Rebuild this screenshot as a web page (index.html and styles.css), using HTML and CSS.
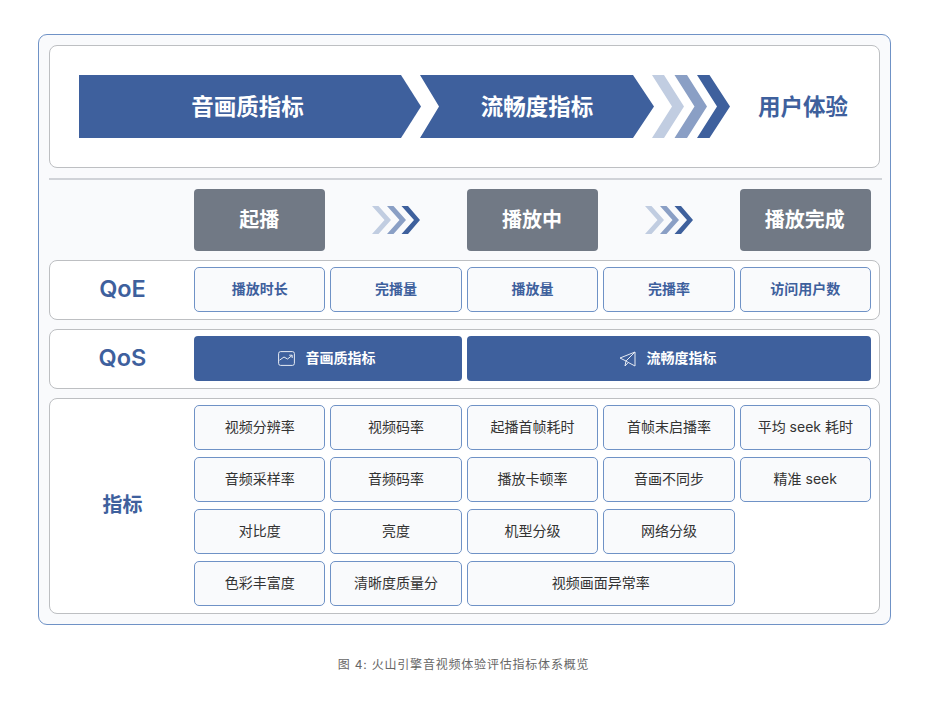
FILE: index.html
```html
<!DOCTYPE html>
<html lang="zh-CN">
<head>
<meta charset="utf-8">
<title>火山引擎音视频体验评估指标体系概览</title>
<link rel="stylesheet" href="styles.css">
</head>
<body>
<main class="frame">
  <section class="panel top">
    <div class="arrow first">音画质指标</div>
    <div class="arrow second">流畅度指标</div>
    <svg class="big-chevrons" viewBox="0 0 78 63" aria-hidden="true">
      <polygon class="c1" points="0,0 12,0 32,31.500 12,63 0,63 20,31.500"/>
      <polygon class="c2" points="22.500,0 35,0 55,31.500 35,63 22.500,63 42.500,31.500"/>
      <polygon class="c3" points="45,0 57.500,0 78,31.500 57.500,63 45,63 65,31.500"/>
    </svg>
    <div class="goal">用户体验</div>
  </section>
  <div class="divider"></div>
  <section class="grid stages">
    <div class="stage s1">起播</div>
    <div class="stage-arrow"><svg viewBox="0 0 48 28" aria-hidden="true"><polygon class="c1" points="0,0 6.500,0 19,14 6.500,28 0,28 12.500,14"/><polygon class="c2" points="15,0 21.500,0 34,14 21.500,28 15,28 27.500,14"/><polygon class="c3" points="29.500,0 36,0 48,14 36,28 29.500,28 42,14"/></svg></div>
    <div class="stage">播放中</div>
    <div class="stage-arrow"><svg viewBox="0 0 48 28" aria-hidden="true"><polygon class="c1" points="0,0 6.500,0 19,14 6.500,28 0,28 12.500,14"/><polygon class="c2" points="15,0 21.500,0 34,14 21.500,28 15,28 27.500,14"/><polygon class="c3" points="29.500,0 36,0 48,14 36,28 29.500,28 42,14"/></svg></div>
    <div class="stage">播放完成</div>
  </section>
  <section class="panel grid row">
    <div class="label latin">QoE</div>
    <div class="cell strong">播放时长</div>
    <div class="cell strong">完播量</div>
    <div class="cell strong">播放量</div>
    <div class="cell strong">完播率</div>
    <div class="cell strong">访问用户数</div>
  </section>
  <section class="panel grid row">
    <div class="label latin">QoS</div>
    <div class="fill span2">
      <svg class="ico" viewBox="0 0 17 15" aria-hidden="true"><rect x="0.600" y="0.600" width="15.800" height="13.800" rx="2"/><path d="M1.500 9.200 L6 6 L9.500 8 L14 4.500 M11.200 4.200 H14.200 V7"/></svg>
      <span>音画质指标</span>
    </div>
    <div class="fill span3">
      <svg class="ico plane" viewBox="0 0 17 16" aria-hidden="true"><path d="M16 1 L1 7 L7 10 L16 1 V15 L9 11.300 L7 10 L6 15 L9 11.800"/></svg>
      <span>流畅度指标</span>
    </div>
  </section>
  <section class="panel grid metrics">
    <div class="label cjk">指标</div>
    <div class="cell">视频分辨率</div>
    <div class="cell">视频码率</div>
    <div class="cell">起播首帧耗时</div>
    <div class="cell">首帧末启播率</div>
    <div class="cell">平均 seek 耗时</div>
    <div class="cell">音频采样率</div>
    <div class="cell">音频码率</div>
    <div class="cell">播放卡顿率</div>
    <div class="cell">音画不同步</div>
    <div class="cell">精准 seek</div>
    <div class="cell">对比度</div>
    <div class="cell">亮度</div>
    <div class="cell">机型分级</div>
    <div class="cell">网络分级</div>
    <div class="cell blank"></div>
    <div class="cell">色彩丰富度</div>
    <div class="cell">清晰度质量分</div>
    <div class="cell span2">视频画面异常率</div>
  </section>
</main>
<p class="caption">图 4: 火山引擎音视频体验评估指标体系概览</p>
</body>
</html>
```
FILE: styles.css
```css
* { box-sizing: border-box; }
html, body { margin: 0; background: #fff; }
body {
  padding: 34px 0 0 38px;
  font-family: Inter, "Noto Sans CJK SC", sans-serif;
  color: #333;
}
.frame {
  width: 853px;
  height: 591px;
  padding: 10px;
  border: 1px solid #6f92c6;
  border-radius: 9px;
  background: #f9fafc;
}
.panel {
  border: 1px solid #bdbfc2;
  border-radius: 8px;
  background: #fff;
}
.top {
  display: flex;
  align-items: center;
  height: 123px;
  padding-left: 29px;
}
.arrow {
  display: flex;
  align-items: center;
  justify-content: center;
  height: 63px;
  padding-bottom: 4px;
  background: #3e609d;
  color: #fff;
  font-size: 22.500px;
  font-weight: 700;
}
.first {
  width: 342px;
  padding-right: 5px;
  clip-path: polygon(0 0, 322px 0, 100% 50%, 322px 100%, 0 100%);
}
.second {
  width: 234px;
  margin-left: -1px;
  clip-path: polygon(0 0, 213px 0, 100% 50%, 213px 100%, 0 100%, 19px 50%);
}
.big-chevrons { width: 78px; height: 63px; margin-left: -2px; flex: none; }
.c1 { fill: #c1cde1; }
.c2 { fill: #8a9fc5; }
.c3 { fill: #3e609d; }
.goal {
  margin-left: 28px;
  padding-bottom: 4px;
  color: #3e609d;
  font-size: 22.500px;
  font-weight: 700;
}
.divider {
  height: 2px;
  margin: 10px -2px 0 0;
  background: #d0d3d8;
}
.grid {
  display: grid;
  grid-template-columns: 139px repeat(5, 1fr);
  column-gap: 5px;
}
.stages {
  height: 62px;
  margin-top: 9px;
  padding: 0 9px 0 1px;
}
.s1 { grid-column: 2; }
.stage {
  display: flex;
  align-items: center;
  justify-content: center;
  padding: 0 1px 4px 0;
  border-radius: 4px;
  background: #717985;
  color: #fff;
  font-size: 20px;
  font-weight: 700;
}
.stage-arrow { display: flex; align-items: center; justify-content: center; }
.stage-arrow svg { width: 48px; height: 28px; }
.row {
  height: 60px;
  margin-top: 9px;
  padding: 6px 8px 7px 0;
}
.metrics {
  height: 216px;
  margin-top: 9px;
  padding: 6px 8px 0 0;
  grid-template-rows: repeat(4, 45px);
  row-gap: 7px;
}
.label {
  display: flex;
  align-items: center;
  justify-content: center;
  padding: 0 0 3px 6px;
  color: #3e609d;
  font-weight: 700;
}
.latin { font-size: 23.500px; font-weight: 600; }
.cjk { padding-bottom: 4px; font-size: 20px; grid-row: 1 / span 4; }
.cell {
  display: flex;
  align-items: center;
  justify-content: center;
  padding-bottom: 4px;
  border: 1px solid #6f92c6;
  border-radius: 5px;
  background: #f9fafc;
  font-size: 14px;
  color: #333;
}
.strong { color: #3e609d; font-weight: 700; }
.blank { visibility: hidden; }
.span2 { grid-column: span 2; }
.span3 { grid-column: span 3; }
.fill {
  display: flex;
  align-items: center;
  justify-content: center;
  gap: 10px;
  padding-right: 2px;
  border-radius: 4px;
  background: #3e609d;
  color: #fff;
  font-size: 14px;
  font-weight: 700;
}
.fill span { padding-bottom: 3px; }
.ico {
  width: 17px;
  height: 15px;
  fill: none;
  stroke: #e6ebf3;
  stroke-width: 1;
  flex: none;
}
.plane { height: 16px; }
.caption {
  width: 851px;
  margin: 30px 0 0;
  text-align: center;
  font-size: 12px;
  line-height: 20px;
  letter-spacing: 0.8px;
  color: #666;
}
```
